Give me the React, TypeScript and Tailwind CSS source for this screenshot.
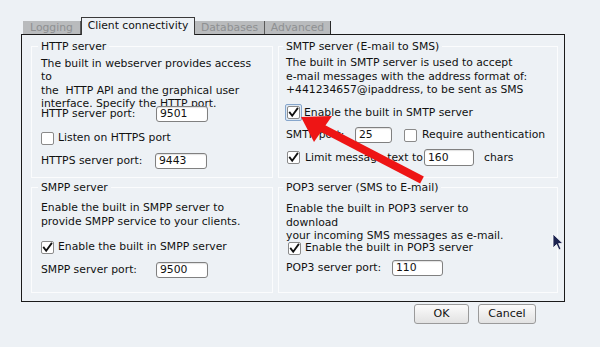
import React from "react";

const Check = ({ checked, className = "" }: { checked?: boolean; className?: string }) => (
  <span className={"flex items-center justify-center w-[13px] h-[13px] shrink-0 bg-white border border-[#8a8a8a] rounded-[2px] " + className}>
    {checked && (
      <svg width="11" height="11" viewBox="0 0 11 11">
        <polyline points="1.8,5.6 4.2,8.8 9.4,1.6" fill="none" stroke="#111" strokeWidth="1.8" strokeLinecap="square" />
      </svg>
    )}
  </span>
);

const Input = ({ value, className = "" }: { value: string; className?: string }) => (
  <span className={"flex items-center bg-white border border-[#808080] rounded-[3px] pl-[3px] shadow-[inset_0_1px_1px_rgba(0,0,0,0.12)] " + className}>
    {value}
  </span>
);

const Group = ({ title, className = "", children }: { title: string; className?: string; children: React.ReactNode }) => (
  <fieldset className={"border border-[#fbfcfd] min-w-0 " + className}>
    <legend className="-ml-[3px] px-[3px] leading-[13px]">{title}</legend>
    {children}
  </fieldset>
);

export default function App() {
  return (
    <div
      className="relative w-[600px] h-[347px] overflow-hidden bg-[#edf1f5] text-[10.8px] text-[#111]"
      style={{ fontFamily: '"DejaVu Sans", "Liberation Sans", sans-serif' }}
    >
      <div className="ml-[21px] pt-[17px] w-[544px]">
        {/* Tabs */}
        <div className="relative z-10 flex items-end h-[18px] -mb-[1px] pl-[2px]">
          <div className="mb-[1px] h-[13px] w-[57px] bg-[#b9bbbd] text-[#8e9092] leading-[13px] text-center">Logging</div>
          <div className="mb-[1px] h-[13px] w-px bg-[#5a5a5a]" />
          <div className="h-[18px] w-[114px] border border-b-0 border-[#3a3a3a] bg-[#edf1f5] leading-[16px] text-center text-[#111]">
            Client connectivity
          </div>
          <div className="mb-[1px] h-[13px] w-[69px] bg-[#b9bbbd] text-[#8e9092] leading-[13px] text-center">Databases</div>
          <div className="mb-[1px] h-[13px] w-px bg-[#5a5a5a]" />
          <div className="mb-[1px] h-[13px] w-[66px] bg-[#b9bbbd] text-[#8e9092] leading-[13px] text-center border-r border-[#2a2a2a]">
            Advanced
          </div>
        </div>

        {/* Frame */}
        <div className="border border-[#1a1a1a] h-[268px] pt-[5px] pl-[9px] pr-[7px] grid grid-cols-[242px_280px] grid-rows-[138px_112px] gap-x-[5px] gap-y-[3px]">
          {/* HTTP */}
          <Group title="HTTP server" className="px-[9px] pt-[4px]">
            <div className="h-[49px] leading-[13.3px] whitespace-pre">
              {"The built in webserver provides access\nto\nthe  HTTP API and the graphical user\ninterface. Specify the HTTP port."}
            </div>
            <div className="flex items-center h-[16px]">
              <span className="w-[115px]">HTTP server port:</span>
              <Input value="9501" className="w-[52px] h-[16px]" />
            </div>
            <div className="flex items-center h-[16px] mt-[8px] gap-[4px]">
              <Check />
              <span>Listen on HTTPS port</span>
            </div>
            <div className="flex items-center h-[16px] mt-[7px]">
              <span className="w-[114px]">HTTPS server port:</span>
              <Input value="9443" className="w-[52px] h-[16px]" />
            </div>
          </Group>

          {/* SMTP */}
          <Group title="SMTP server (E-mail to SMS)" className="pl-[7px] pr-[4px] pt-[3px]">
            <div className="leading-[13.7px] whitespace-pre">
              {"The built in SMTP server is used to accept\ne-mail messages with the address format of:\n+441234657@ipaddress, to be sent as SMS"}
            </div>
            <div className="flex items-center h-[17px] mt-[7px]">
              <span className="-ml-[1px] flex items-center justify-center w-[17px] h-[17px] border border-[#86a6cc] rounded-[2px] bg-[#dde8f4]">
                <Check checked />
              </span>
              <span className="ml-[2px]">Enable the built in SMTP server</span>
            </div>
            <div className="flex items-center h-[16px] mt-[6px]">
              <span className="w-[69px]">SMTP port:</span>
              <Input value="25" className="w-[37px] h-[16px]" />
              <Check className="ml-[12px] w-[12px] h-[12px]" />
              <span className="ml-[5px]">Require authentication</span>
            </div>
            <div className="flex items-center h-[17px] mt-[6px]">
              <Check checked className="ml-[1px] w-[12px] h-[12px]" />
              <span className="ml-[5px] w-[119px]">Limit message text to</span>
              <Input value="160" className="w-[50px] h-[17px]" />
              <span className="ml-[10px]">chars</span>
            </div>
          </Group>

          {/* SMPP */}
          <Group title="SMPP server" className="px-[9px] pt-[7px]">
            <div className="leading-[14px] whitespace-pre">
              {"Enable the built in SMPP server to\nprovide SMPP service to your clients."}
            </div>
            <div className="flex items-center h-[16px] mt-[10px] gap-[4px]">
              <Check checked />
              <span>Enable the built in SMPP server</span>
            </div>
            <div className="flex items-center h-[16px] mt-[7px]">
              <span className="w-[115px]">SMPP server port:</span>
              <Input value="9500" className="w-[52px] h-[16px]" />
            </div>
          </Group>

          {/* POP3 */}
          <Group title="POP3 server (SMS to E-mail)" className="pl-[7px] pr-[4px] pt-[8px]">
            <div className="h-[38px] leading-[13.5px] whitespace-pre">
              {"Enable the built in POP3 server to\ndownload\nyour incoming SMS messages as e-mail."}
            </div>
            <div className="flex items-center h-[16px]">
              <Check checked className="ml-[2px] w-[12px] h-[12px]" />
              <span className="ml-[4px]">Enable the built in POP3 server</span>
            </div>
            <div className="flex items-center h-[16px] mt-[4px]">
              <span className="w-[106px]">POP3 server port:</span>
              <Input value="110" className="w-[51px] h-[16px]" />
            </div>
          </Group>
        </div>

        {/* Buttons */}
        <div className="flex justify-end gap-[9px] pr-[29px] mt-[2px]">
          <button className="w-[55px] h-[20px] border border-[#9a9a9a] rounded-[3px] bg-gradient-to-b from-[#fbfbfb] to-[#e2e2e2] text-[11px]">
            OK
          </button>
          <button className="w-[58px] h-[20px] border border-[#9a9a9a] rounded-[3px] bg-gradient-to-b from-[#fbfbfb] to-[#e2e2e2] text-[11px]">
            Cancel
          </button>
        </div>
      </div>

      {/* Red annotation arrow */}
      <svg className="absolute left-0 top-0 pointer-events-none" width="600" height="347" viewBox="0 0 600 347">
        <line x1="322" y1="128" x2="422" y2="180" stroke="#ee1515" strokeWidth="8" />
        <polygon points="301,117 332,116 314,142" fill="#ee1515" />
      </svg>

      {/* Mouse cursor */}
      <svg className="absolute left-[552px] top-[233px] pointer-events-none" width="14" height="20" viewBox="0 0 14 20">
        <polygon points="1,1 1,15 4.5,11.5 7,17 9,16 6.6,10.6 11,10.6" fill="#1c2350" stroke="#ffffff" strokeWidth="0.8" />
      </svg>
    </div>
  );
}
